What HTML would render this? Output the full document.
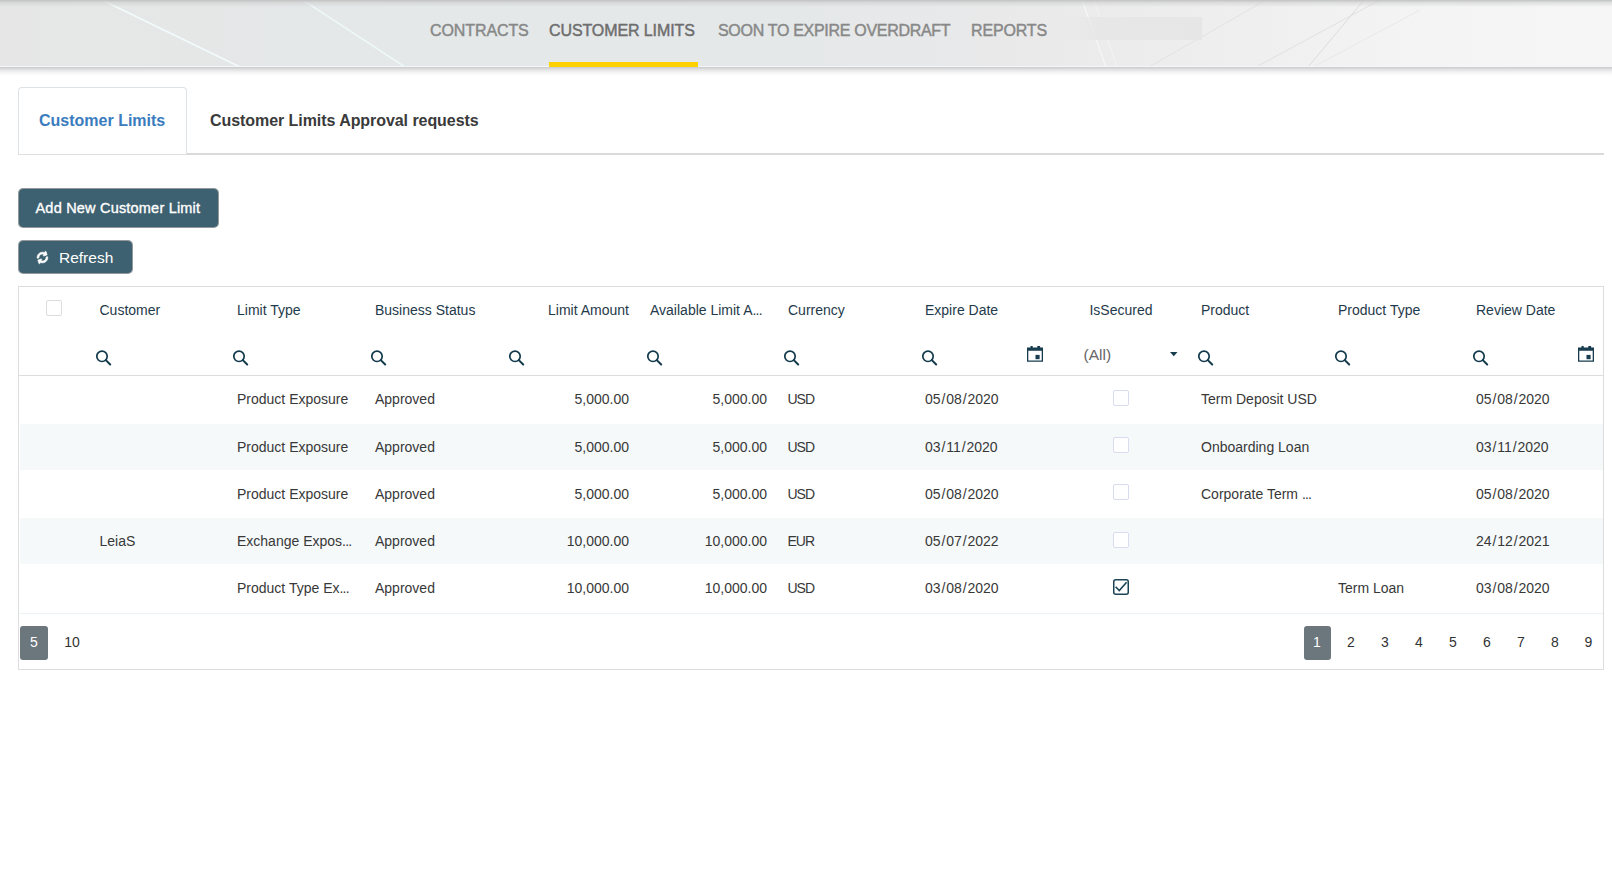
<!DOCTYPE html>
<html><head><meta charset="utf-8">
<style>
*{box-sizing:border-box;margin:0;padding:0}
html,body{width:1612px;height:881px;overflow:hidden;background:#fff;font-family:"Liberation Sans",sans-serif;color:#333}
.a{position:absolute;white-space:nowrap}
#hdr{position:absolute;left:0;top:0;width:1612px;height:67px;overflow:hidden;
 background:linear-gradient(90deg,#e6e6e6 0px,#e5e7e7 200px,#e4e8e9 420px,#e5e8e9 800px,#e9e9ea 1000px,#f0efef 1250px,#f4f4f4 1420px,#f6f6f6 1612px);}
#hdr .topsh{position:absolute;left:0;top:0;width:1612px;height:7px;background:linear-gradient(rgba(190,191,191,.95),rgba(205,206,206,.6) 35%,rgba(228,230,230,0))}
#hdr .btm{position:absolute;left:0;top:66px;width:1612px;height:1px;background:#f4f6f8}
#shadow{position:absolute;left:0;top:67px;width:1612px;height:9px;background:linear-gradient(#c9cacc,#e3e3e4 30%,#f6f6f6 65%,#fff)}
.nav{position:absolute;top:22px;font-size:16px;font-weight:normal;-webkit-text-stroke:.45px currentColor;color:#888;line-height:18px;letter-spacing:-0.1px}
#yb{position:absolute;left:549px;top:62px;width:149px;height:5px;background:#ffd100}
.tab{position:absolute;font-size:16px;font-weight:bold;line-height:18px}
.btn{position:absolute;background:#3d6170;background-clip:padding-box;border:1px solid rgba(40,50,55,.5);border-radius:5px;color:#fff}
.hd{position:absolute;top:302px;font-size:14px;line-height:16px;color:#1f3a4a}
.c{position:absolute;font-size:14px;line-height:16px;color:#383838}
.r{text-align:right}
.sl{font-style:normal;margin:0 .9px}
.el{font-style:normal;letter-spacing:-.8px}
.srch{position:absolute;top:349.1px;width:16px;height:17px}
.cb{position:absolute;width:16px;height:16px;border:1px solid #ddd;border-radius:2px;background:#fff}
.cbl{border-color:#d9dbee}
.shade{position:absolute;left:20px;width:1583px;background:#f5f9fa}
.pg{position:absolute;top:634px;font-size:14px;line-height:16px;color:#333;text-align:center;width:20px}
</style></head>
<body>
<div id="hdr">
 <svg class="a" style="left:0;top:0" width="1612" height="67" viewBox="0 0 1612 67">
  <g fill="none" stroke-linecap="butt">
   <line x1="102" y1="0" x2="240" y2="67" stroke="#f2fbfb" stroke-width="1.6"/>
   <line x1="303" y1="0" x2="405" y2="67" stroke="#eef8f8" stroke-width="1.5"/>
   <line x1="1082" y1="0" x2="1106" y2="67" stroke="#f6f6f6" stroke-width="1.3"/><line x1="1094" y1="0" x2="1117" y2="67" stroke="#f3f3f3" stroke-width="1"/>
   <line x1="1149" y1="67" x2="1266" y2="0" stroke="#e2e2e2" stroke-width="1"/>
   <line x1="1256" y1="67" x2="1380" y2="0" stroke="#e0e0e0" stroke-width="1"/>
   <line x1="1308" y1="67" x2="1364" y2="0" stroke="#dcdcdc" stroke-width="1"/>
   <line x1="1313" y1="67" x2="1420" y2="10" stroke="#e8e8e8" stroke-width="1"/>
  </g>
  <defs><linearGradient id="rg" x1="0" x2="1"><stop offset="0" stop-color="#e8e7e8" stop-opacity="0"/><stop offset="0.3" stop-color="#e8e7e8" stop-opacity="1"/><stop offset="1" stop-color="#e7e6e7"/></linearGradient></defs><rect x="1060" y="17" width="142" height="23" fill="url(#rg)"/>
 </svg>
 <div class="topsh"></div>
 <div class="btm"></div>
 <div class="nav" style="left:430px">CONTRACTS</div>
 <div class="nav" style="left:549px;color:#6e6e6e">CUSTOMER LIMITS</div>
 <div class="nav" style="left:718px;letter-spacing:-0.3px">SOON TO EXPIRE OVERDRAFT</div>
 <div class="nav" style="left:971px;letter-spacing:-0.15px">REPORTS</div>
 <div id="yb"></div>
</div>
<div id="shadow"></div>

<!-- tabs -->
<div class="a" style="left:18px;top:153px;width:1586px;height:2px;background:#dadada"></div>
<div class="a" style="left:18px;top:87px;width:169px;height:67px;border:1px solid #dde2e7;border-bottom:none;border-radius:4px 4px 0 0;background:#fff"></div>
<div class="a" style="left:18px;top:154px;width:169px;height:1px;background:#e0e0e0"></div>
<div class="tab" style="left:39px;top:112px;color:#3a7cbd">Customer Limits</div>
<div class="tab" style="left:210px;top:112px;color:#3a3a3a;letter-spacing:-0.06px">Customer Limits Approval requests</div>

<!-- buttons -->
<div class="btn" style="left:18px;top:188px;width:201px;height:40px"></div>
<div class="a" style="left:35.5px;top:199.5px;font-size:14.5px;letter-spacing:.2px;-webkit-text-stroke:.35px #fff;color:#fff;line-height:16px">Add New Customer Limit</div>
<div class="btn" style="left:18px;top:240px;width:115px;height:34px"></div>
<svg class="a" style="left:36px;top:251px;transform:rotate(-20deg)" width="13" height="13" viewBox="-40 -168 1616 1872"><path fill="#fff" stroke="#fff" stroke-width="90" stroke-linejoin="round" d="M1511 928q0 5-1 7-64 268-268 434.5t-478 166.5q-146 0-282.5-55t-243.5-157l-129 129q-19 19-45 19t-45-19-19-45v-448q0-26 19-45t45-19h448q26 0 45 19t19 45-19 45l-137 137q71 66 161 102t187 36q134 0 250-65t186-179q11-17 53-117 8-23 30-23h192q13 0 22.5 9.5t9.5 22.5zm25-800v448q0 26-19 45t-45 19h-448q-26 0-45-19t-19-45 19-45l138-138q-148-137-349-137-134 0-250 65t-186 179q-11 17-53 117-8 23-30 23h-199q-13 0-22.5-9.5t-9.5-22.5v-7q65-268 270-434.5t480-166.5q146 0 284 55.5t245 156.5l130-129q19-19 45-19t45 19 19 45z"/></svg>
<div class="a" style="left:59px;top:249px;font-size:15.5px;color:#fff;line-height:18px">Refresh</div>

<!-- table -->
<div class="a" style="left:18px;top:286px;width:1586px;height:384px;border:1px solid #ddd"></div>
<div class="a" style="left:19px;top:375px;width:1584px;height:1px;background:#ddd"></div>
<div class="shade" style="top:424px;height:46px"></div>
<div class="shade" style="top:518px;height:46px"></div>
<div class="a" style="left:19px;top:613px;width:1584px;height:1px;background:#eaf3f5"></div>

<div class="cb" style="left:46px;top:300px"></div>
<div class="hd" style="left:99.5px">Customer</div>
<div class="hd" style="left:237px">Limit Type</div>
<div class="hd" style="left:375px">Business Status</div>
<div class="hd r" style="left:501px;width:128px">Limit Amount</div>
<div class="hd" style="left:650px">Available Limit A<i class="el">...</i></div>
<div class="hd" style="left:788px">Currency</div>
<div class="hd" style="left:925px">Expire Date</div>
<div class="hd" style="left:1051px;width:140px;text-align:center">IsSecured</div>
<div class="hd" style="left:1201px">Product</div>
<div class="hd" style="left:1338px">Product Type</div>
<div class="hd" style="left:1476px">Review Date</div>

<!-- filter row -->
<svg width="0" height="0" style="position:absolute">
 <defs>
  <g id="sic"><circle cx="6" cy="7.3" r="5.2" fill="none" stroke="#123a4c" stroke-width="1.7"/><line x1="9.8" y1="11.1" x2="14.2" y2="15.5" stroke="#123a4c" stroke-width="2" stroke-linecap="round"/></g>
  <g id="cal"><rect x="3.5" y="0" width="2.2" height="2" fill="#173d4f"/><rect x="10.3" y="0" width="2.8" height="2" fill="#173d4f"/><path d="M0 1.5H16V15.8H0ZM1.3 4.8V14.5H14.7V4.8Z" fill="#173d4f" fill-rule="evenodd"/><rect x="8.5" y="8.9" width="4.1" height="4.3" fill="#173d4f"/></g>
 </defs>
</svg>
<svg class="srch" style="left:95.6px"><use href="#sic"/></svg>
<svg class="srch" style="left:233.3px"><use href="#sic"/></svg>
<svg class="srch" style="left:371.0px"><use href="#sic"/></svg>
<svg class="srch" style="left:508.8px"><use href="#sic"/></svg>
<svg class="srch" style="left:646.5px"><use href="#sic"/></svg>
<svg class="srch" style="left:784.2px"><use href="#sic"/></svg>
<svg class="srch" style="left:921.9px"><use href="#sic"/></svg>
<svg class="a" style="left:1027px;top:345.5px" width="16" height="16"><use href="#cal"/></svg>
<div class="a" style="left:1083.5px;top:345.5px;font-size:15.5px;line-height:17px;color:#666">(All)</div>
<svg class="a" style="left:1169.8px;top:351.8px" width="8" height="5"><polygon points="0,0 7.5,0 3.75,4.2" fill="#173d4f"/></svg>
<svg class="srch" style="left:1197.6px"><use href="#sic"/></svg>
<svg class="srch" style="left:1335.3px"><use href="#sic"/></svg>
<svg class="srch" style="left:1473.0px"><use href="#sic"/></svg>
<svg class="a" style="left:1577.5px;top:345.5px" width="16" height="16"><use href="#cal"/></svg>

<!-- rows -->
<div id="rows"></div>
<div class="c" style="left:237px;top:391px">Product Exposure</div>
<div class="c" style="left:375px;top:391px">Approved</div>
<div class="c r" style="left:501px;width:128px;top:391px">5,000.00</div>
<div class="c r" style="left:639px;width:128px;top:391px">5,000.00</div>
<div class="c" style="left:787.5px;top:391px;letter-spacing:-1px">USD</div>
<div class="c" style="left:925px;top:391px">05<i class="sl">/</i>08<i class="sl">/</i>2020</div>
<div class="cb cbl" style="left:1113px;top:390px"></div>
<div class="c" style="left:1201px;top:391px">Term Deposit USD</div>
<div class="c" style="left:1476px;top:391px">05<i class="sl">/</i>08<i class="sl">/</i>2020</div>

<div class="c" style="left:237px;top:439px">Product Exposure</div>
<div class="c" style="left:375px;top:439px">Approved</div>
<div class="c r" style="left:501px;width:128px;top:439px">5,000.00</div>
<div class="c r" style="left:639px;width:128px;top:439px">5,000.00</div>
<div class="c" style="left:787.5px;top:439px;letter-spacing:-1px">USD</div>
<div class="c" style="left:925px;top:439px">03<i class="sl">/</i>11<i class="sl">/</i>2020</div>
<div class="cb cbl" style="left:1113px;top:437px"></div>
<div class="c" style="left:1201px;top:439px">Onboarding Loan</div>
<div class="c" style="left:1476px;top:439px">03<i class="sl">/</i>11<i class="sl">/</i>2020</div>

<div class="c" style="left:237px;top:486px">Product Exposure</div>
<div class="c" style="left:375px;top:486px">Approved</div>
<div class="c r" style="left:501px;width:128px;top:486px">5,000.00</div>
<div class="c r" style="left:639px;width:128px;top:486px">5,000.00</div>
<div class="c" style="left:787.5px;top:486px;letter-spacing:-1px">USD</div>
<div class="c" style="left:925px;top:486px">05<i class="sl">/</i>08<i class="sl">/</i>2020</div>
<div class="cb cbl" style="left:1113px;top:484px"></div>
<div class="c" style="left:1201px;top:486px">Corporate Term <i class="el">...</i></div>
<div class="c" style="left:1476px;top:486px">05<i class="sl">/</i>08<i class="sl">/</i>2020</div>

<div class="c" style="left:99.5px;top:533px">LeiaS</div>
<div class="c" style="left:237px;top:533px">Exchange Expos<i class="el">...</i></div>
<div class="c" style="left:375px;top:533px">Approved</div>
<div class="c r" style="left:501px;width:128px;top:533px">10,000.00</div>
<div class="c r" style="left:639px;width:128px;top:533px">10,000.00</div>
<div class="c" style="left:787.5px;top:533px;letter-spacing:-1px">EUR</div>
<div class="c" style="left:925px;top:533px">05<i class="sl">/</i>07<i class="sl">/</i>2022</div>
<div class="cb cbl" style="left:1113px;top:532px"></div>
<div class="c" style="left:1476px;top:533px">24<i class="sl">/</i>12<i class="sl">/</i>2021</div>

<div class="c" style="left:237px;top:580px">Product Type Ex<i class="el">...</i></div>
<div class="c" style="left:375px;top:580px">Approved</div>
<div class="c r" style="left:501px;width:128px;top:580px">10,000.00</div>
<div class="c r" style="left:639px;width:128px;top:580px">10,000.00</div>
<div class="c" style="left:787.5px;top:580px;letter-spacing:-1px">USD</div>
<div class="c" style="left:925px;top:580px">03<i class="sl">/</i>08<i class="sl">/</i>2020</div>
<svg class="a" style="left:1113px;top:579px" width="16" height="16" viewBox="0 0 16 16">
 <rect x="0.75" y="0.75" width="14.5" height="14.5" rx="2" fill="#fff" stroke="#1b4556" stroke-width="1.5"/>
 <polyline points="2.6,7.8 6.3,11.6 13.6,3.3" fill="none" stroke="#1b4556" stroke-width="1.6"/>
</svg>
<div class="c" style="left:1338px;top:580px">Term Loan</div>
<div class="c" style="left:1476px;top:580px">03<i class="sl">/</i>08<i class="sl">/</i>2020</div>

<!-- pager -->
<div class="a" style="left:20px;top:626px;width:28px;height:34px;background:#6c767d;border-radius:3px"></div>
<div class="pg" style="left:24px;color:#fff">5</div>
<div class="pg" style="left:62px">10</div>
<div class="a" style="left:1304px;top:626px;width:27px;height:34px;background:#6c767d;border-radius:3px"></div>
<div class="pg" style="left:1307px;color:#fff">1</div>
<div class="pg" style="left:1341px">2</div>
<div class="pg" style="left:1375px">3</div>
<div class="pg" style="left:1409px">4</div>
<div class="pg" style="left:1443px">5</div>
<div class="pg" style="left:1477px">6</div>
<div class="pg" style="left:1511px">7</div>
<div class="pg" style="left:1545px">8</div>
<div class="pg" style="left:1578.5px">9</div>
</body></html>
